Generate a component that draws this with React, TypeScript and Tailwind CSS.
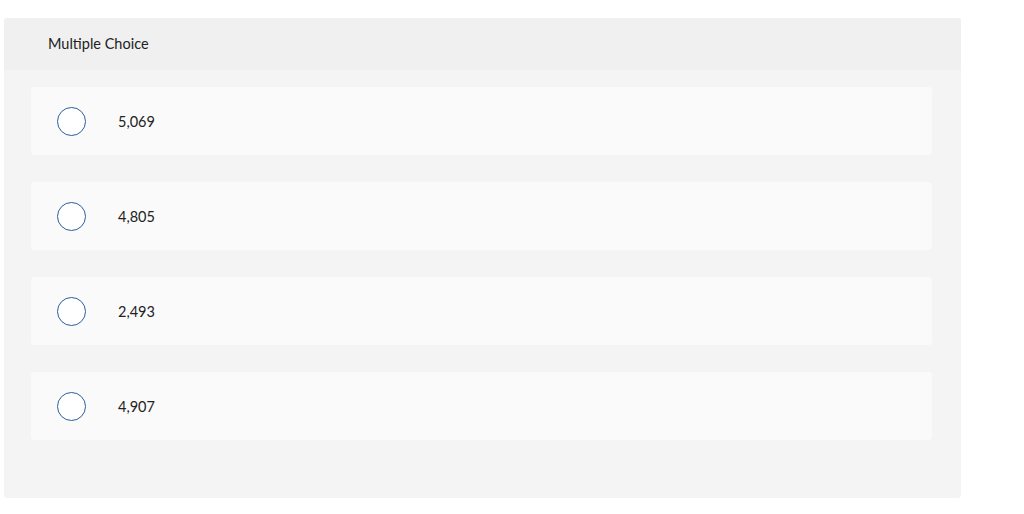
const options = ['5,069', '4,805', '2,493', '4,907'];

export default function App() {
  return (
    <div className="min-h-[514px] bg-white pt-[18px] pl-[4px]" style={{ fontFamily: 'Lato, "Noto Sans", sans-serif' }}>
      <div className="w-[957px] overflow-hidden rounded-[3px] bg-[#f4f4f4]">
        {/* Header */}
        <div className="flex h-[52px] items-center bg-[#f0f0f0] pl-[44px] text-[14.5px] text-[#222]">
          Multiple Choice
        </div>

        {/* Options */}
        <div className="flex flex-col gap-[27px] px-[27px] pt-[17px] pb-[58px]">
          {options.map((opt) => (
            <label
              key={opt}
              className="flex h-[68px] w-[901px] cursor-pointer items-center rounded-[4px] bg-[#fafafa] pl-[26px]"
            >
              <span className="h-[29px] w-[29px] flex-shrink-0 rounded-full border-[1.5px] border-[#2a5e9c] bg-white" />
              <span className="ml-[32px] pt-[2px] text-[14.5px] text-[#222]">{opt}</span>
            </label>
          ))}
        </div>
      </div>
    </div>
  );
}
